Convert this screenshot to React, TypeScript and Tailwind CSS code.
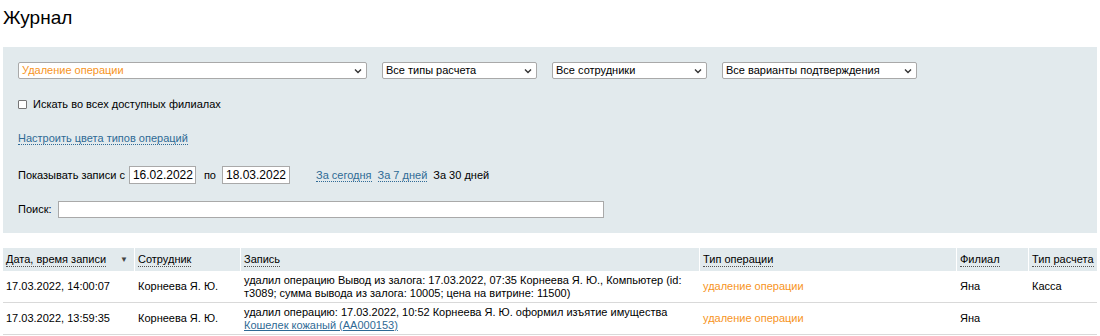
import React from "react";

const Chevron = () => (
  <svg width="8" height="6" viewBox="0 0 8 6" className="shrink-0">
    <path d="M1 1.5 L4 4.5 L7 1.5" fill="none" stroke="#333" strokeWidth="1.4" />
  </svg>
);

const Select = ({ text, w, orange }: { text: string; w: string; orange?: boolean }) => (
  <div className={`${w} h-[17px] bg-white border border-[#a9a9a9] rounded-[2px] flex items-center justify-between pl-[3px] pr-[4px]`}>
    <span className={orange ? "text-[#f7941d]" : "text-black"}>{text}</span>
    <Chevron />
  </div>
);

const DLink = ({ children }: { children: React.ReactNode }) => (
  <span className="text-[#2f6a95] border-b border-dotted border-[#2f6a95] leading-[13px]">{children}</span>
);

const HeadCell = ({ children, w, extra }: { children: React.ReactNode; w: string; extra?: React.ReactNode }) => (
  <div className={`${w} px-[3px] flex items-center justify-between border-r border-white last:border-r-0`}>
    <span className="border-b border-dotted border-[#555] leading-[13px]">{children}</span>
    {extra}
  </div>
);

export default function App() {
  const rows = [
    {
      date: "17.03.2022, 14:00:07",
      emp: "Корнеева Я. Ю.",
      rec: (
        <>
          удалил операцию Вывод из залога: 17.03.2022, 07:35 Корнеева Я. Ю., Компьютер (id:
          <br />
          т3089; сумма вывода из залога: 10005; цена на витрине: 11500)
        </>
      ),
      br: "Яна",
      pay: "Касса",
    },
    {
      date: "17.03.2022, 13:59:35",
      emp: "Корнеева Я. Ю.",
      rec: (
        <>
          удалил операцию: 17.03.2022, 10:52 Корнеева Я. Ю. оформил изъятие имущества
          <br />
          <span className="text-[#2f6a95] underline">Кошелек кожаный (АА000153)</span>
        </>
      ),
      br: "Яна",
      pay: "",
    },
  ];
  return (
    <div className="w-[1100px] h-[336px] bg-white text-[11px] text-black overflow-hidden" style={{ fontFamily: '"Liberation Sans", Arial, sans-serif' }}>
      <div className="pl-[3px] pt-[6px] h-[47px] text-[19px] leading-[24px]">Журнал</div>
      <div className="mx-[3px] bg-[#e2eaed] h-[186px] pl-[15px] pt-[15px]">
        <div className="flex items-center gap-[15px]">
          <Select text="Удаление операции" w="w-[349px]" orange />
          <Select text="Все типы расчета" w="w-[155px]" />
          <Select text="Все сотрудники" w="w-[155px]" />
          <Select text="Все варианты подтверждения" w="w-[195px]" />
        </div>
        <div className="flex items-center mt-[17px] gap-[6px]">
          <div className="w-[9px] h-[9px] bg-white border border-[#767676] rounded-[1px]" />
          <span>Искать во всех доступных филиалах</span>
        </div>
        <div className="mt-[17px]">
          <DLink>Настроить цвета типов операций</DLink>
        </div>
        <div className="flex items-center mt-[20px]">
          <span>Показывать записи с</span>
          <div className="ml-[4px] w-[67px] h-[18px] bg-white border border-[#a9a9a9] flex items-center pl-[3px] text-[12px]">16.02.2022</div>
          <span className="ml-[8px]">по</span>
          <div className="ml-[6px] w-[68px] h-[18px] bg-white border border-[#a9a9a9] flex items-center pl-[3px] text-[12px]">18.03.2022</div>
          <span className="ml-[26px]"><DLink>За сегодня</DLink></span>
          <span className="ml-[6px]"><DLink>За 7 дней</DLink></span>
          <span className="ml-[6px]">За 30 дней</span>
        </div>
        <div className="flex items-center mt-[17px]">
          <span>Поиск:</span>
          <div className="ml-[6px] w-[546px] h-[17px] bg-white border border-[#a9a9a9]" />
        </div>
      </div>
      <div className="mx-[3px] mt-[15px]">
        <div className="flex h-[23px] bg-[#e2eaed]">
          <HeadCell w="w-[132px]" extra={<span className="text-[8px] text-[#444] mr-[3px]">▼</span>}>Дата, время записи</HeadCell>
          <HeadCell w="w-[106px]">Сотрудник</HeadCell>
          <HeadCell w="w-[459px]">Запись</HeadCell>
          <HeadCell w="w-[257px]">Тип операции</HeadCell>
          <HeadCell w="w-[72px]">Филиал</HeadCell>
          <HeadCell w="flex-1">Тип расчета</HeadCell>
        </div>
        {rows.map((r, i) => (
          <div key={i} className="flex h-[32px] border-b border-[#d9d9d9] items-center leading-[13px]">
            <div className="w-[132px] px-[3px]">{r.date}</div>
            <div className="w-[106px] px-[3px]">{r.emp}</div>
            <div className="w-[459px] px-[3px]">{r.rec}</div>
            <div className="w-[257px] px-[3px] text-[#f7941d]">удаление операции</div>
            <div className="w-[72px] px-[3px]">{r.br}</div>
            <div className="flex-1 px-[3px]">{r.pay}</div>
          </div>
        ))}
      </div>
    </div>
  );
}
